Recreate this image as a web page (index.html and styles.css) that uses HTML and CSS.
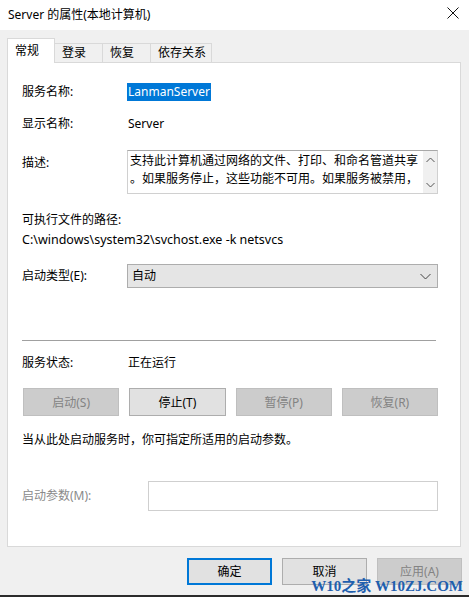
FILE: index.html
```html
<!DOCTYPE html>
<html lang="zh-CN">
<head>
    <meta charset="UTF-8">
    <title>Server 的属性(本地计算机)</title>
    <link rel="stylesheet" href="styles.css">
</head>
<body>
    <div class="window">
        <div class="titlebar">
            <span class="title">Server 的属性(本地计算机)</span>
            <svg class="close" width="12" height="12" viewBox="0 0 12 12">
                <path d="M0.5 0.5 L11.5 11.5 M11.5 0.5 L0.5 11.5" stroke="#111" stroke-width="1" fill="none"/>
            </svg>
        </div>

        <div class="dialog">
            <div class="tabs">
                <div class="tab active">常规</div>
                <div class="tab">登录</div>
                <div class="tab">恢复</div>
                <div class="tab">依存关系</div>
            </div>

            <div class="panel">
                <div class="row r-name">
                    <span class="label">服务名称:</span>
                    <span class="value"><span class="selected">LanmanServer</span></span>
                </div>
                <div class="row r-display">
                    <span class="label">显示名称:</span>
                    <span class="value">Server</span>
                </div>
                <div class="row r-desc">
                    <span class="label">描述:</span>
                    <div class="desc-box">
                        <div class="desc-text">
                            <div>支持此计算机通过网络的文件、打印、和命名管道共享</div>
                            <div>。如果服务停止，这些功能不可用。如果服务被禁用，</div>
                        </div>
                        <div class="scroll">
                            <svg width="9" height="6" viewBox="0 0 9 6"><path d="M0.5 5 L4.5 1 L8.5 5" stroke="#555" fill="none"/></svg>
                            <svg width="9" height="6" viewBox="0 0 9 6"><path d="M0.5 1 L4.5 5 L8.5 1" stroke="#555" fill="none"/></svg>
                        </div>
                    </div>
                </div>
                <div class="path-label">可执行文件的路径:</div>
                <div class="path">C:\windows\system32\svchost.exe -k netsvcs</div>
                <div class="row r-startup">
                    <span class="label">启动类型(E):</span>
                    <div class="combo">
                        <span>自动</span>
                        <svg width="11" height="7" viewBox="0 0 11 7"><path d="M0.5 1 L5.5 6 L10.5 1" stroke="#444" fill="none"/></svg>
                    </div>
                </div>

                <div class="separator"></div>

                <div class="row r-status">
                    <span class="label">服务状态:</span>
                    <span class="value">正在运行</span>
                </div>
                <div class="btn-row">
                    <button class="btn" disabled>启动(S)</button>
                    <button class="btn">停止(T)</button>
                    <button class="btn" disabled>暂停(P)</button>
                    <button class="btn" disabled>恢复(R)</button>
                </div>
                <div class="hint">当从此处启动服务时，你可指定所适用的启动参数。</div>
                <div class="row r-param">
                    <span class="label disabled">启动参数(M):</span>
                    <div class="param-input"></div>
                </div>
            </div>

            <div class="actions">
                <button class="btn default">确定</button>
                <button class="btn">取消</button>
                <button class="btn" disabled>应用(A)</button>
            </div>

            <div class="watermark">W10之家 W10ZJ.COM</div>
        </div>
        <div class="bottom-strip"></div>
    </div>
</body>
</html>
```

FILE: styles.css
```css
body {
    margin: 0;
    font-family: "Noto Sans", "Noto Sans CJK SC", sans-serif;
    font-size: 12px;
    color: #000;
    background: #f0f0f0;
}

.window {
    width: 469px;
    height: 597px;
    overflow: hidden;
    display: flex;
    flex-direction: column;
}

.titlebar {
    height: 30px;
    background: #fff;
    display: flex;
    align-items: center;
    justify-content: space-between;
    padding: 0 10px 0 8px;
    flex-shrink: 0;
}

.title {
    font-size: 12px;
    margin-top: -2px;
}

.close {
    margin-top: -5px;
}

.dialog {
    flex: 1;
    background: #f0f0f0;
    position: relative;
}

/* tabs */
.tabs {
    display: flex;
    align-items: flex-end;
    height: 33px;
    margin-bottom: -1px;
    padding-left: 7px;
    position: relative;
    z-index: 1;
}

.tab {
    box-sizing: border-box;
    min-width: 48px;
    height: 19px;
    margin-bottom: 1px;
    padding: 0 5px 0 7px;
    line-height: 18px;
    border: 1px solid #d9d9d9;
    border-bottom: none;
    border-left: none;
    background: #f0f0f0;
}

.tab.active {
    height: 25px;
    margin-bottom: 0;
    line-height: 24px;
    background: #fff;
    border-left: 1px solid #d9d9d9;
}

/* panel */
.panel {
    margin: 0 8px 0 7px;
    background: #fff;
    border: 1px solid #d9d9d9;
    padding: 0 22px 35px 14px;
}

.row {
    display: grid;
    grid-template-columns: 106px 1fr;
    align-items: center;
    line-height: 18px;
}

.label.disabled {
    color: #8a8a8a;
}

.selected {
    background: #0078d7;
    color: #fff;
    padding: 0 1px;
    margin-left: -1px;
    display: inline-block;
    height: 18px;
}

.r-name {
    margin-top: 20px;
}

.r-display {
    margin-top: 14px;
}

.r-desc {
    margin-top: 17px;
    align-items: start;
}

.r-desc .label {
    padding-top: 4px;
}

.desc-box {
    height: 44px;
    box-sizing: border-box;
    border: 1px solid #d0d0d0;
    border-top-color: #a8a8a8;
    display: flex;
    margin-left: -1px;
}

.desc-text {
    flex: 1;
    padding: 1px 0 0 2px;
    overflow: hidden;
    white-space: nowrap;
}

.scroll {
    width: 14px;
    background: #f0f0f0;
    display: flex;
    flex-direction: column;
    align-items: center;
    justify-content: space-between;
    padding: 6px 0 5px;
}

.path-label {
    margin-top: 17px;
    line-height: 18px;
}

.path {
    margin-top: 2px;
    line-height: 18px;
    font-size: 12.5px;
}

.r-startup {
    margin-top: 15px;
}

.combo {
    height: 24px;
    box-sizing: border-box;
    border: 1px solid #adadad;
    background: #e5e5e5;
    display: flex;
    align-items: center;
    justify-content: space-between;
    padding: 0 6px 0 4px;
    margin-left: -1px;
}

.separator {
    margin-top: 52px;
    height: 1px;
    background: #a0a0a0;
    margin-right: 2px;
}

.r-status {
    margin-top: 13px;
}

.btn {
    font-family: inherit;
    font-size: 12px;
    color: #000;
    height: 28px;
    box-sizing: border-box;
    background: #e1e1e1;
    border: 1px solid #adadad;
    padding: 0;
}

.btn:disabled {
    background: #cccccc;
    border-color: #bfbfbf;
    color: #838383;
}

.btn-row {
    margin-top: 16px;
    display: grid;
    grid-template-columns: repeat(4, 1fr);
    gap: 10px;
    padding-left: 1px;
}

.hint {
    margin-top: 15px;
    line-height: 18px;
}

.r-param {
    margin-top: 32px;
    grid-template-columns: 126px 1fr;
}

.param-input {
    height: 30px;
    box-sizing: border-box;
    border: 1px solid #cfcfcf;
    background: #fff;
}

/* bottom buttons */
.actions {
    display: flex;
    justify-content: flex-end;
    gap: 10px;
    margin-top: 11px;
    padding-right: 7px;
}

.actions .btn {
    width: 85px;
    height: 27px;
    line-height: 14px;
}

.actions .btn.default {
    border: 2px solid #0078d7;
}

.watermark {
    position: absolute;
    right: 6px;
    bottom: 3px;
    font-family: "Liberation Serif", "Noto Sans CJK SC", serif;
    font-weight: bold;
    font-size: 15px;
    line-height: 11px;
    color: #1f5fae;
}

.bottom-strip {
    height: 2px;
    background: #2b2b2b;
    flex-shrink: 0;
}
```
